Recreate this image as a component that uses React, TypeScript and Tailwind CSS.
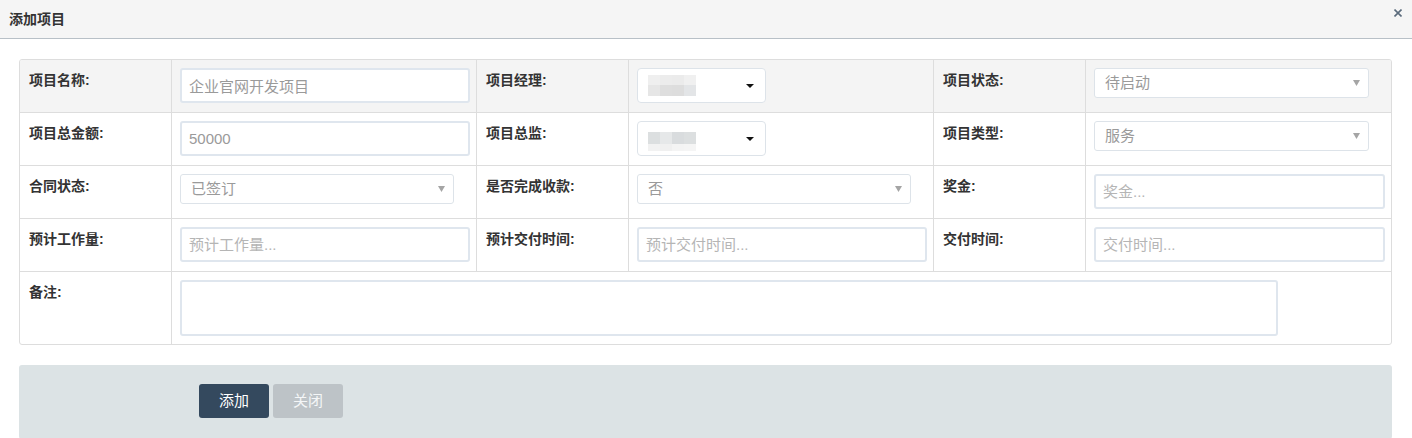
const font = "font-['Liberation_Sans','Noto_Sans_CJK_SC',sans-serif]";

function Label({ text, last }: { text: string; last?: boolean }) {
  return (
    <div className={`h-[53px] border-b border-r border-[#dddddd] pl-[9px] pt-[10px] text-[14px] font-bold leading-[20px] text-[#333] ${last ? "" : ""}`}>
      {text}
    </div>
  );
}

function Cell({ children, last }: { children: React.ReactNode; last?: boolean }) {
  return (
    <div className={`h-[53px] border-b border-[#dddddd] p-[8px] ${last ? "" : "border-r"}`}>{children}</div>
  );
}

function TextInput({ value, placeholder, w = "w-[290px]" }: { value?: string; placeholder?: string; w?: string }) {
  return (
    <input
      readOnly
      defaultValue={value}
      placeholder={placeholder}
      className={`${w} h-[35px] rounded-[3px] border-2 border-[#dfe6ee] bg-white pl-[7px] text-[15px] text-[#9a9a9a] outline-none placeholder:text-[#b5b5b5]`}
    />
  );
}

function Select({ value, w = "w-[274px]" }: { value: string; w?: string }) {
  return (
    <div className={`${w} flex h-[30px] items-center justify-between rounded-[3px] border border-[#dde3e9] bg-white pl-[10px] pr-[8px]`}>
      <span className="text-[15px] text-[#9a9a9a]">{value}</span>
      <svg width="7" height="6" viewBox="0 0 7 6">
        <path d="M0 0h7L3.5 6z" fill="#a5a5a5" />
      </svg>
    </div>
  );
}

function Picker({ tiles, rows, top }: { tiles: string[]; rows: number[]; top: number }) {
  return (
    <div className="flex h-[35px] w-[129px] items-start justify-between rounded-[4px] border border-[#dde3e9] bg-white pl-[10px] pr-[11px]">
      <div className="grid grid-cols-[12px_12px_12px_12px]" style={{ marginTop: top, gridTemplateRows: rows.map((r) => r + "px").join(" ") }}>
        {tiles.map((c, i) => (
          <div key={i} style={{ background: c }} />
        ))}
      </div>
      <svg className="mt-[15px]" width="8" height="4" viewBox="0 0 8 4">
        <path d="M0 0h8L4 4z" fill="#111" />
      </svg>
    </div>
  );
}

export default function App() {
  return (
    <div className={`${font} h-[438px] w-[1412px] overflow-hidden bg-white`}>
      <div className="flex h-[39px] items-start justify-between border-b border-[#b8c0c7] bg-[#f5f5f5]">
        <h4 className="mt-[9px] pl-[9px] text-[14px] font-bold leading-[20px] text-[#333]">添加项目</h4>
        <svg className="mr-[10px] mt-[9px]" width="8" height="8" viewBox="0 0 8 8">
          <path d="M0.5 0.5l7 7M7.5 0.5l-7 7" stroke="#5b6b7c" strokeWidth="1.6" />
        </svg>
      </div>

      <div className="ml-[19px] mt-[20px] grid w-[1373px] grid-cols-[152px_305px_152px_305px_152px_305px] overflow-hidden rounded-[3px] border border-[#dddddd]">
        <div className="col-span-6 grid grid-cols-subgrid bg-[#f4f4f4]">
          <Label text="项目名称:" />
          <Cell>
            <TextInput value="企业官网开发项目" />
          </Cell>
          <Label text="项目经理:" />
          <Cell>
            <Picker top={6} rows={[10, 11]} tiles={["#efefef", "#ececec", "#ebebeb", "#f0f0f0", "#e6e6e6", "#dedede", "#dddddd", "#e3e5e7"]} />
          </Cell>
          <Label text="项目状态:" />
          <Cell last>
            <Select value="待启动" w="w-[275px]" />
          </Cell>
        </div>

        <Label text="项目总金额:" />
        <Cell>
          <TextInput value="50000" />
        </Cell>
        <Label text="项目总监:" />
        <Cell>
          <Picker top={10} rows={[12, 7]} tiles={["#dcdfe0", "#e6e8e9", "#d9dcde", "#dcdfe0", "#f2f2f2", "#f0f0f0", "#f4f4f4", "#f5f5f5"]} />
        </Cell>
        <Label text="项目类型:" />
        <Cell last>
          <Select value="服务" w="w-[275px]" />
        </Cell>

        <Label text="合同状态:" />
        <Cell>
          <Select value="已签订" />
        </Cell>
        <Label text="是否完成收款:" />
        <Cell>
          <Select value="否" />
        </Cell>
        <Label text="奖金:" />
        <Cell last>
          <TextInput placeholder="奖金..." w="w-[291px]" />
        </Cell>

        <Label text="预计工作量:" />
        <Cell>
          <TextInput placeholder="预计工作量..." />
        </Cell>
        <Label text="预计交付时间:" />
        <Cell>
          <TextInput placeholder="预计交付时间..." />
        </Cell>
        <Label text="交付时间:" />
        <Cell last>
          <TextInput placeholder="交付时间..." w="w-[291px]" />
        </Cell>

        <div className="h-[72px] border-r border-[#dddddd] pl-[9px] pt-[10px] text-[14px] font-bold leading-[20px] text-[#333]">备注:</div>
        <div className="col-span-5 h-[72px] p-[8px]">
          <textarea readOnly className="h-[56px] w-[1098px] resize-none rounded-[3px] border-2 border-[#dfe6ee] bg-white outline-none" />
        </div>
      </div>

      <div className="ml-[19px] mt-[20px] flex h-[74px] w-[1373px] gap-[4px] rounded-[3px] bg-[#dce3e5] pl-[180px] pt-[19px]">
        <button className="h-[34px] w-[70px] rounded-[3px] bg-[#34495e] text-[15px] text-white">添加</button>
        <button className="h-[34px] w-[70px] rounded-[3px] bg-[#bdc3c7] text-[15px] text-[#f4f6f7]">关闭</button>
      </div>
    </div>
  );
}
